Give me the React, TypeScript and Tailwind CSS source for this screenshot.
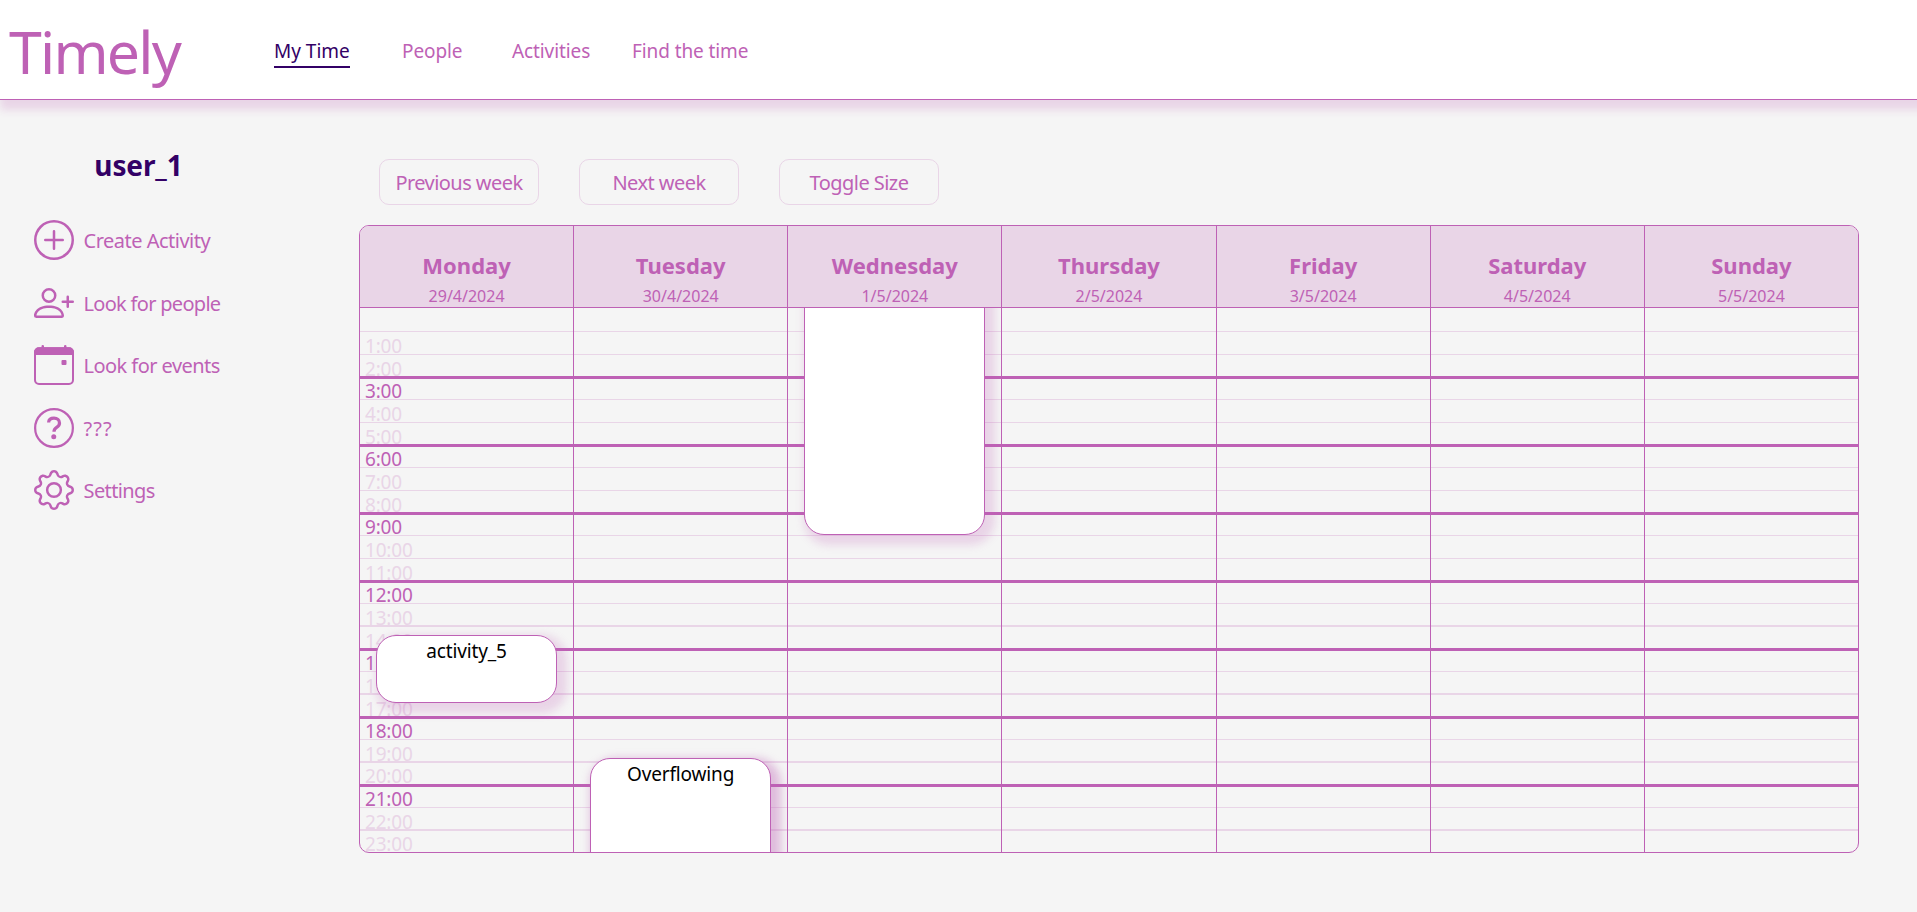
import React from 'react';
import { BsPlusCircle, BsPersonPlus, BsGear } from 'react-icons/bs';

const CalendarIcon = () => (
  <svg viewBox="0 0 16 16" className="size-10" fill="currentColor">
    <path fillRule="evenodd" d="M14 1.7H2A1.2 1.2 0 0 0 .8 2.900V14A1.200 1.200 0 0 0 2 15.200h12a1.200 1.200 0 0 0 1.200-1.200V2.900A1.200 1.200 0 0 0 14 1.700zM2 .9h12a2 2 0 0 1 2 2V14a2 2 0 0 1-2 2H2a2 2 0 0 1-2-2V2.900a2 2 0 0 1 2-2z" />
    <path d="M0 2.900a2 2 0 0 1 2-2h12a2 2 0 0 1 2 2v1.100H0z" />
    <path d="M3.500 0a.5.5 0 0 1 .5.5V2H3V.5a.5.5 0 0 1 .5-.5zm9 0a.5.5 0 0 1 .5.5V2h-1V.5a.5.5 0 0 1 .5-.5z" />
    <rect x="11" y="6" width="2" height="2" rx=".4" />
  </svg>
);

const QuestionIcon = () => (
  <svg viewBox="0 0 16 16" className="size-10" fill="none" stroke="currentColor">
    <circle cx="8" cy="8" r="7.550" strokeWidth=".9" />
    <path d="M5.850 5.800C5.900 4.650 6.750 4.050 8 4.050c1.300 0 2.200.7 2.200 1.900 0 .85-.45 1.350-1.150 1.800-.8.500-1.050.8-1.050 1.750" strokeWidth="1.300" />
    <circle cx="7.900" cy="11.450" r="1" fill="currentColor" stroke="none" />
  </svg>
);

const menu = [
  { label: 'Create Activity', icon: <BsPlusCircle className="size-10" />, text: 'tracking-[-0.5px]' },
  { label: 'Look for people', icon: <BsPersonPlus className="size-10" />, text: 'tracking-[-0.7px]' },
  { label: 'Look for events', icon: <CalendarIcon />, text: 'tracking-[-0.55px]' },
  { label: '???', icon: <QuestionIcon />, text: 'tracking-[1.1px]' },
  { label: 'Settings', icon: <BsGear className="size-10" />, text: 'tracking-[-0.6px]' },
];

const days = [
  ['Monday', '29/4/2024'],
  ['Tuesday', '30/4/2024'],
  ['Wednesday', '1/5/2024'],
  ['Thursday', '2/5/2024'],
  ['Friday', '3/5/2024'],
  ['Saturday', '4/5/2024'],
  ['Sunday', '5/5/2024'],
];

const eventBase =
  'absolute left-4 w-[181px] rounded-[20px] border border-[#be61b5] bg-white text-center text-[19px] leading-[30px] tracking-[-0.15px] text-black';

function DayEvent({ day }: { day: number }) {
  if (day === 0)
    return (
      <div className={`${eventBase} top-[327px] h-[68px] shadow-[5px_5px_8px_5px_rgba(190,97,181,0.22)]`}>
        activity_5
      </div>
    );
  if (day === 1)
    return (
      <div className={`${eventBase} top-[450px] h-[200px] shadow-[5px_5px_8px_5px_rgba(190,97,181,0.38)]`}>
        Overflowing
      </div>
    );
  if (day === 2)
    return (
      <div className={`${eventBase} -top-[60px] h-[287px] shadow-[5px_5px_8px_5px_rgba(190,97,181,0.22)]`} />
    );
  return null;
}

function rowClass(hour: number) {
  const pos = hour % 3;
  if (pos === 2) return 'h-6 border-b-[3px] border-[#be61b5]';
  if (pos === 1) return hour > 12 ? 'h-[23px] border-b-2 border-[#e9d5e7]' : 'h-[23px] border-b border-[#e9d5e7]';
  return hour === 0 ? 'h-6 border-b border-[#e9d5e7]' : 'h-[21px] border-b border-[#e9d5e7]';
}

function labelClass(hour: number) {
  if (hour % 3 === 0) return 'leading-[25px] text-[#be61b5]';
  return hour === 20 || hour === 23 ? 'leading-[26px] text-[#e9d5e7]' : 'leading-[28px] text-[#e9d5e7]';
}

function Column({ day }: { day: number }) {
  return (
    <div className={`relative h-[544px] min-w-0 flex-1 overflow-hidden ${day < 6 ? 'border-r border-[#be61b5]' : ''}`}>
      {Array.from({ length: 24 }, (_, hour) => (
        <div key={hour} className={`overflow-hidden pl-[5px] ${rowClass(hour)}`}>
          {day === 0 && hour > 0 && (
            <div className={`text-[19px] tracking-[-0.2px] ${labelClass(hour)}`}>{hour}:00</div>
          )}
        </div>
      ))}
      <DayEvent day={day} />
    </div>
  );
}

const navItem = 'text-[19px] leading-[26px] tracking-[-0.1px]';
const button =
  'flex h-[46px] w-40 items-center justify-center rounded-[10px] border border-[#e9d5e7] pt-[2px] text-[20px] whitespace-nowrap tracking-[-0.55px]';

export default function App() {
  return (
    <div className="min-h-[912px] bg-[#f5f5f5] font-['Noto_Sans','Open_Sans',sans-serif] text-[#be61b5]">
      <header className="relative flex h-[100px] items-start border-b border-[#be61b5] bg-white shadow-[5px_5px_8px_5px_#e9d5e7]">
        <h1 className="w-[274px] pt-[10px] pl-[9px] text-[59px] leading-[82px] tracking-[-1.8px]">Timely</h1>
        <nav className="flex pt-[38px]">
          <a className="h-[30px] w-[76px] border-b-2 border-[#330066] text-[19px] leading-[26px] whitespace-nowrap text-[#330066]">My Time</a>
          <a className={`${navItem} ml-[52px] w-[110px]`}>People</a>
          <a className={`${navItem} w-[120px]`}>Activities</a>
          <a className={`${navItem} whitespace-nowrap`}>Find the time</a>
        </nav>
      </header>
      <div className="flex">
        <aside className="w-[359px] pt-[45px]">
          <h2 className="w-[277px] text-center text-[28px] leading-[40px] font-bold tracking-[-0.1px] text-[#330066]">user_1</h2>
          <ul className="mt-[35px] flex flex-col gap-[22.5px] pl-[34px]">
            {menu.map((m) => (
              <li key={m.label} className="flex h-10 items-center gap-[9.500px]">
                {m.icon}
                <span className={`pt-[2px] text-[20px] leading-[28px] ${m.text}`}>{m.label}</span>
              </li>
            ))}
          </ul>
        </aside>
        <main className="w-[1500px] pt-[59px]">
          <div className="flex gap-10 pl-5">
            <button className={button}>Previous week</button>
            <button className={button}>Next week</button>
            <button className={button}>Toggle Size</button>
          </div>
          <section className="mt-5 h-[628px] overflow-hidden rounded-[10px] border border-[#be61b5]">
            <div className="flex h-[82px] border-b border-[#be61b5] bg-[#e9d5e7]">
              {days.map(([name, date], i) => (
                <div key={name} className={`min-w-0 flex-1 text-center ${i < 6 ? 'border-r border-[#be61b5]' : ''}`}>
                  <div className="pt-[24px] text-[22px] leading-[30px] font-bold">{name}</div>
                  <div className="pt-px text-[16px] leading-[30px]">{date}</div>
                </div>
              ))}
            </div>
            <div className="flex">
              {days.map(([name], i) => (
                <Column key={name} day={i} />
              ))}
            </div>
          </section>
        </main>
      </div>
    </div>
  );
}
